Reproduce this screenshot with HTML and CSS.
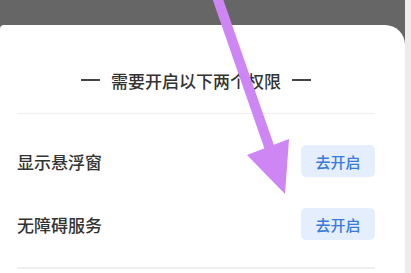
FILE: index.html
```html
<!DOCTYPE html>
<html lang="zh-CN">
<head>
  <meta charset="UTF-8">
  <meta name="viewport" content="width=device-width, initial-scale=1.0">
  <title>权限</title>
  <link rel="stylesheet" href="styles.css">
</head>
<body>
  <div class="screen">
    <div class="sheet">
      <div class="title">
        <span class="dash"></span>
        <span>需要开启以下两个权限</span>
        <span class="dash"></span>
      </div>
      <div class="divider"></div>

      <div class="row first">
        <span class="label">显示悬浮窗</span>
        <button class="btn">去开启</button>
      </div>

      <div class="row">
        <span class="label">无障碍服务</span>
        <button class="btn">去开启</button>
      </div>
      <div class="divider bottom"></div>
    </div>
  </div>
  <div class="edge"></div>

  <svg class="arrow" width="411" height="273" viewBox="0 0 411 273">
    <line x1="216" y1="-6" x2="271" y2="152" stroke="#cd86f3" stroke-width="10" />
    <polygon points="247,155 289,139 285,194" fill="#cd86f3" />
  </svg>
</body>
</html>
```

FILE: styles.css
```css
body {
  margin: 0;
  width: 411px;
  height: 273px;
  overflow: hidden;
  display: flex;
  font-family: "Noto Sans CJK SC", "Noto Sans", sans-serif;
  background-color: #666;
}
.screen {
  width: 405px;
  padding-top: 25px;
  background-color: #666;
}
.edge {
  width: 6px;
  background-color: #ececec;
}
.sheet {
  box-sizing: border-box;
  background-color: #fff;
  border-radius: 4px 20px 0 0;
  height: 248px;
  padding: 44px 30px 0 17px;
}
.title {
  display: flex;
  justify-content: center;
  align-items: center;
  gap: 11px;
  height: 22px;
  font-size: 17px;
  font-weight: 500;
  color: #333;
}
.dash {
  width: 19px;
  height: 2px;
  background-color: #444;
}
.divider {
  height: 1px;
  margin-top: 22px;
  background-color: #eceef0;
}
.divider.bottom {
  margin-top: 27px;
  height: 2px;
}
.row {
  display: flex;
  justify-content: space-between;
  align-items: center;
  margin-top: 31px;
  height: 32px;
}
.label {
  font-size: 17px;
  font-weight: 500;
  color: #333;
}
.btn {
  width: 74px;
  height: 32px;
  border: none;
  border-radius: 5px;
  background-color: #e4eefc;
  color: #3a7ade;
  font-family: inherit;
  font-size: 15px;
  font-weight: 500;
  padding: 0;
}
.arrow {
  position: absolute;
  left: 0;
  top: 0;
}
```
